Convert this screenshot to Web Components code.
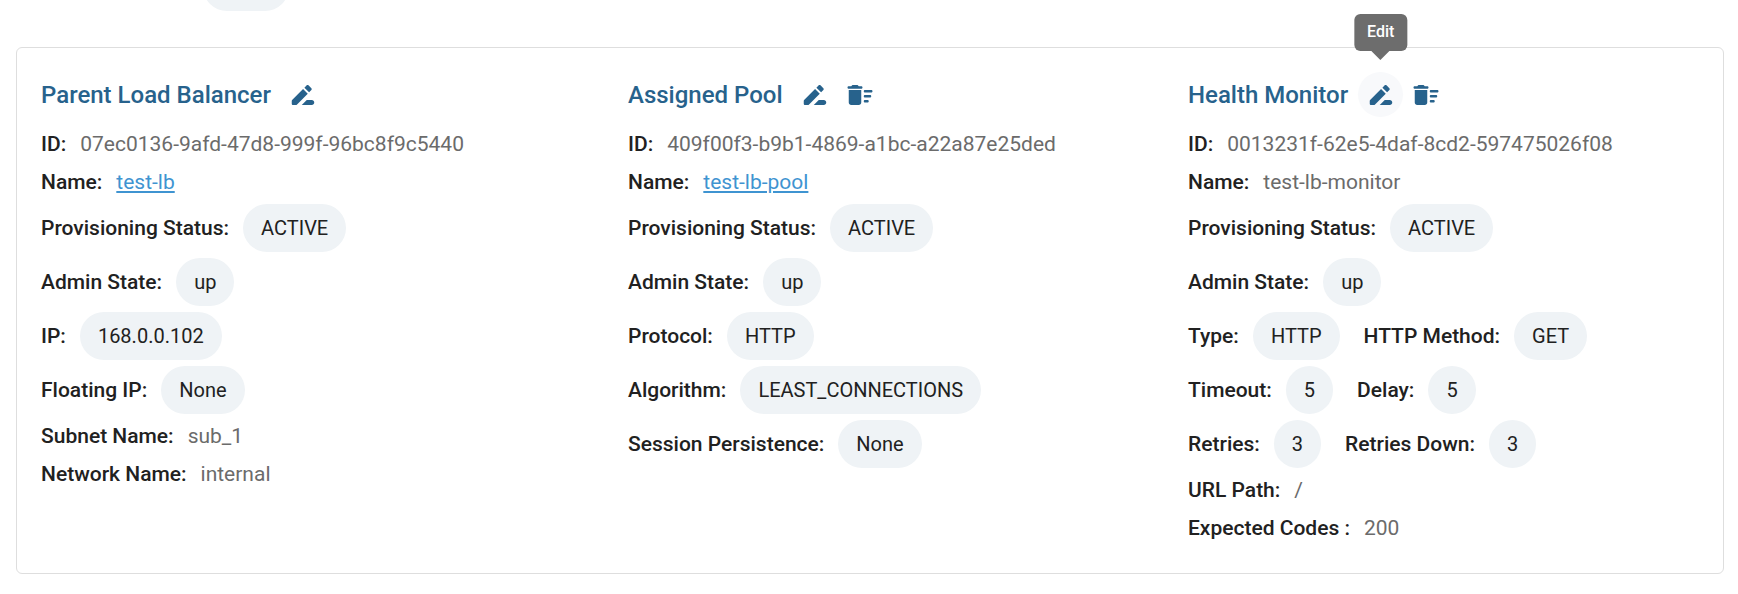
<!DOCTYPE html>
<html lang="en">
<head>
<meta charset="utf-8">
<title>Listener details</title>
<style>
  body {
    margin: 0;
    background: #fff;
    color: #212121;
    font-family: Roboto, "Liberation Sans", sans-serif;
    font-size: 21px;
    line-height: 30px;
  }
</style>
</head>
<body>
<page-strip><value-chip></value-chip></page-strip>

<detail-card>
  <detail-section heading="Parent Load Balancer">
    <icon-button slot="actions" icon="edit" label="Edit"></icon-button>
    <detail-row><detail-field label="ID:">07ec0136-9afd-47d8-999f-96bc8f9c5440</detail-field></detail-row>
    <detail-row><detail-field label="Name:" href="#test-lb">test-lb</detail-field></detail-row>
    <detail-row><detail-field label="Provisioning Status:" chip>ACTIVE</detail-field></detail-row>
    <detail-row><detail-field label="Admin State:" chip>up</detail-field></detail-row>
    <detail-row><detail-field label="IP:" chip>168.0.0.102</detail-field></detail-row>
    <detail-row><detail-field label="Floating IP:" chip>None</detail-field></detail-row>
    <detail-row><detail-field label="Subnet Name:">sub_1</detail-field></detail-row>
    <detail-row><detail-field label="Network Name:">internal</detail-field></detail-row>
  </detail-section>

  <detail-section heading="Assigned Pool">
    <icon-button slot="actions" icon="edit" label="Edit"></icon-button>
    <icon-button slot="actions" icon="delete" label="Delete"></icon-button>
    <detail-row><detail-field label="ID:">409f00f3-b9b1-4869-a1bc-a22a87e25ded</detail-field></detail-row>
    <detail-row><detail-field label="Name:" href="#test-lb-pool">test-lb-pool</detail-field></detail-row>
    <detail-row><detail-field label="Provisioning Status:" chip>ACTIVE</detail-field></detail-row>
    <detail-row><detail-field label="Admin State:" chip>up</detail-field></detail-row>
    <detail-row><detail-field label="Protocol:" chip>HTTP</detail-field></detail-row>
    <detail-row><detail-field label="Algorithm:" chip>LEAST_CONNECTIONS</detail-field></detail-row>
    <detail-row><detail-field label="Session Persistence:" chip>None</detail-field></detail-row>
  </detail-section>

  <detail-section heading="Health Monitor">
    <icon-button slot="actions" icon="edit" label="Edit" active></icon-button>
    <icon-button slot="actions" icon="delete" label="Delete"></icon-button>
    <detail-row><detail-field label="ID:">0013231f-62e5-4daf-8cd2-597475026f08</detail-field></detail-row>
    <detail-row><detail-field label="Name:">test-lb-monitor</detail-field></detail-row>
    <detail-row><detail-field label="Provisioning Status:" chip>ACTIVE</detail-field></detail-row>
    <detail-row><detail-field label="Admin State:" chip>up</detail-field></detail-row>
    <detail-row>
      <detail-field label="Type:" chip>HTTP</detail-field>
      <detail-field label="HTTP Method:" chip>GET</detail-field>
    </detail-row>
    <detail-row>
      <detail-field label="Timeout:" chip>5</detail-field>
      <detail-field label="Delay:" chip>5</detail-field>
    </detail-row>
    <detail-row>
      <detail-field label="Retries:" chip>3</detail-field>
      <detail-field label="Retries Down:" chip>3</detail-field>
    </detail-row>
    <detail-row><detail-field label="URL Path:">/</detail-field></detail-row>
    <detail-row><detail-field label="Expected Codes :">200</detail-field></detail-row>
  </detail-section>
</detail-card>

<script>
// Material "rounded" icons, 24x24 grid
const ICONS = {
  edit: '<path d="M15 16l-4 4h8c1.1 0 2-.9 2-2s-.9-2-2-2h-4zM12.06 7.19L3.29 15.96c-.18.18-.29.44-.29.7V19c0 .55.45 1 1 1h2.34c.26 0 .52-.11.71-.29l8.76-8.77-3.75-3.75zM18.71 8.04c.39-.39.39-1.02 0-1.41l-2.34-2.34c-.39-.39-1.02-.39-1.41 0l-1.83 1.83 3.75 3.75 1.83-1.83z"/>',
  delete: '<path d="M16 16h2c.55 0 1 .45 1 1s-.45 1-1 1h-2c-.55 0-1-.45-1-1s.45-1 1-1zM16 8h5c.55 0 1 .45 1 1s-.45 1-1 1h-5c-.55 0-1-.45-1-1s.45-1 1-1zM16 12h4c.55 0 1 .45 1 1s-.45 1-1 1h-4c-.55 0-1-.45-1-1s.45-1 1-1zM3 18c0 1.1.9 2 2 2h6c1.1 0 2-.9 2-2V8H3v10zM13 5h-2l-.71-.71c-.18-.18-.44-.29-.7-.29H6.41c-.26 0-.52.11-.7.29L5 5H3c-.55 0-1 .45-1 1s.45 1 1 1h10c.55 0 1-.45 1-1s-.45-1-1-1z"/>',
};

/**
 * Base class: puts the markup of render() into an open shadow root
 */
class BaseElement extends HTMLElement {
  connectedCallback() {
    if (this.shadowRoot) return;
    this.attachShadow({ mode: 'open' });
    const template = document.createElement('template');
    template.innerHTML = this.render();
    this.shadowRoot.appendChild(template.content.cloneNode(true));
  }
}

// Lower edge of the block that is scrolled out above the card
class PageStrip extends BaseElement {
  render() {
    return `
      <style>
        :host {
          display: flex;
          align-items: flex-end;
          height: 11px;
          padding-left: 203px;
          overflow: hidden;
        }
        ::slotted(value-chip) {
          min-width: 86px;
          flex: none;
        }
      </style>
      <slot></slot>`;
  }
}

class ValueChip extends BaseElement {
  render() {
    return `
      <style>
        :host {
          display: inline-flex;
          align-items: center;
          box-sizing: border-box;
          height: 48px;
          padding: 0 18px;
          border-radius: 24px;
          background: #eff3f6;
          color: #212121;
          font-size: 20px;
        }
      </style>
      <slot></slot>`;
  }
}

class IconButton extends BaseElement {
  render() {
    const label = this.getAttribute('label');
    const tooltip = this.hasAttribute('active')
      ? `<span class="tooltip" role="tooltip">${label}</span>`
      : '';
    return `
      <style>
        :host {
          display: block;
          position: relative;
        }
        button {
          display: flex;
          align-items: center;
          justify-content: center;
          width: 45px;
          height: 45px;
          padding: 0;
          border: 0;
          border-radius: 50%;
          background: none;
          color: #27628c;
          cursor: pointer;
        }
        button:hover, :host([active]) button {
          background: #f8f9fb;
        }
        svg {
          width: 30px;
          height: 30px;
          fill: currentColor;
        }
        .tooltip {
          position: absolute;
          bottom: calc(100% + 21px);
          left: 50%;
          transform: translateX(-50%);
          padding: 6px 13px 7px;
          border-radius: 6px;
          background: #6d6d6d;
          color: #fff;
          font-size: 16px;
          font-weight: 500;
          line-height: 24px;
        }
        .tooltip::after {
          content: "";
          position: absolute;
          top: 100%;
          left: 50%;
          margin-left: -9px;
          border: 9px solid transparent;
          border-top-color: #6d6d6d;
          border-bottom: 0;
        }
      </style>
      <button type="button" aria-label="${label}">
        <svg viewBox="0 0 24 24" aria-hidden="true">${ICONS[this.getAttribute('icon')]}</svg>
      </button>
      ${tooltip}`;
  }
}

class DetailField extends BaseElement {
  render() {
    let value = '<span><slot></slot></span>';
    if (this.hasAttribute('chip')) {
      value = '<value-chip><slot></slot></value-chip>';
    } else if (this.hasAttribute('href')) {
      value = `<a href="${this.getAttribute('href')}"><slot></slot></a>`;
    }
    return `
      <style>
        :host {
          display: flex;
          align-items: center;
          gap: 14px;
          padding: 3px 0 5px;
          color: #6b6b6b;
        }
        :host([chip]) {
          padding: 2px 0 4px;
        }
        .label {
          color: #212121;
          font-weight: 500;
        }
        a {
          color: #3f94d1;
          text-decoration: underline;
        }
      </style>
      <span class="label">${this.getAttribute('label')}</span>
      ${value}`;
  }
}

class DetailRow extends BaseElement {
  render() {
    return `
      <style>
        :host {
          display: flex;
          flex-wrap: wrap;
          column-gap: 24px;
        }
      </style>
      <slot></slot>`;
  }
}

class DetailSection extends BaseElement {
  render() {
    return `
      <style>
        :host {
          display: block;
        }
        header {
          display: flex;
          align-items: center;
          margin-bottom: 9px;
        }
        h2 {
          margin: 0 10px 0 0;
          color: #27628c;
          font-size: 24px;
          font-weight: 500;
          line-height: 32px;
        }
      </style>
      <header>
        <h2>${this.getAttribute('heading')}</h2>
        <slot name="actions"></slot>
      </header>
      <slot></slot>`;
  }
}

class DetailCard extends BaseElement {
  render() {
    return `
      <style>
        :host {
          display: grid;
          grid-template-columns: 587fr 560fr 511fr;
          margin: 36px 14px 20px 16px;
          padding: 24px 24px 25px;
          border: 1px solid #dedede;
          border-radius: 6px;
        }
      </style>
      <slot></slot>`;
  }
}

customElements.define('page-strip', PageStrip);
customElements.define('value-chip', ValueChip);
customElements.define('icon-button', IconButton);
customElements.define('detail-field', DetailField);
customElements.define('detail-row', DetailRow);
customElements.define('detail-section', DetailSection);
customElements.define('detail-card', DetailCard);
</script>
</body>
</html>
